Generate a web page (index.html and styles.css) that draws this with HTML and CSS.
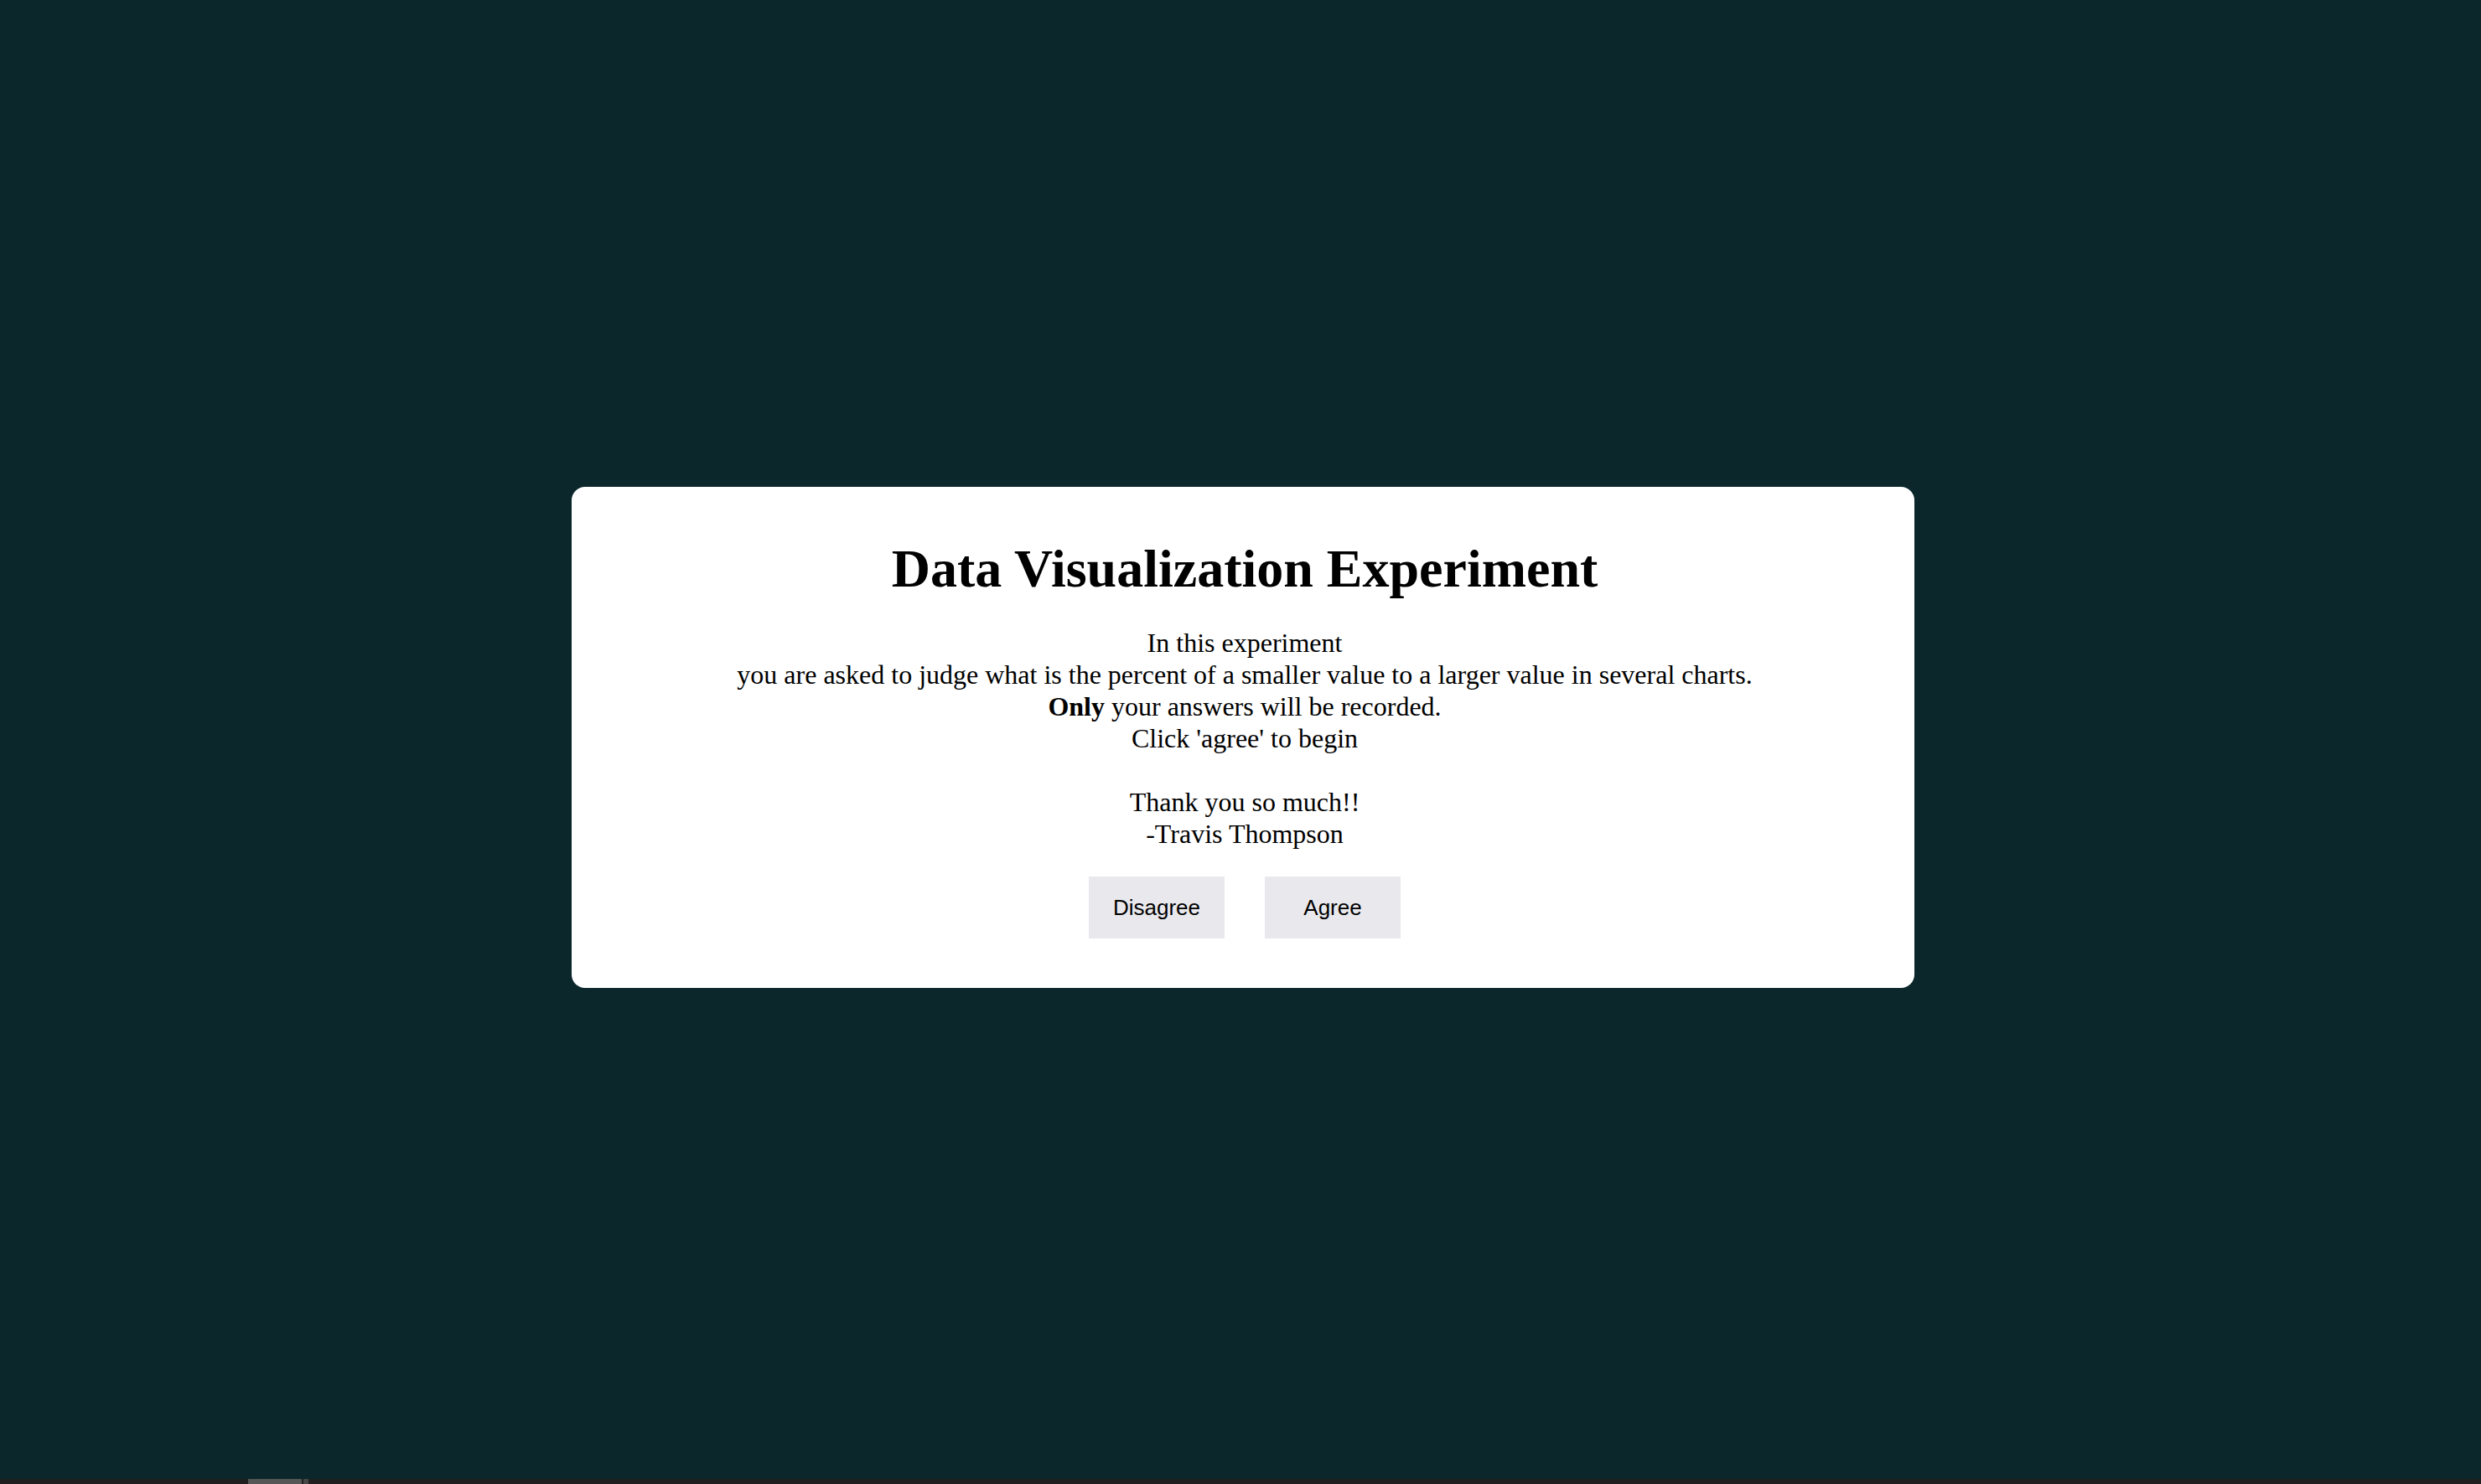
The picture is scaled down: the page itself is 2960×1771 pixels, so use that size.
FILE: index.html
```html
<!DOCTYPE html>
<html lang="en">
<head>
<meta charset="utf-8">
<title>Data Visualization Experiment</title>
<link rel="stylesheet" href="styles.css">
</head>
<body>
<div class="stage">
  <div class="modal">
    <h1 class="title">Data Visualization Experiment</h1>
    <div class="intro">
      In this experiment<br>
      you are asked to judge what is the percent of a smaller value to a larger value in several charts.<br>
      <b>Only</b> your answers will be recorded.<br>
      Click 'agree' to begin<br>
      <br>
      Thank you so much!!<br>
      -Travis Thompson
    </div>
    <div class="actions">
      <button class="btn" type="button">Disagree</button>
      <button class="btn" type="button">Agree</button>
    </div>
  </div>
</div>
<div class="scrollbar">
  <span class="thumb"></span>
  <span class="thumb-tail"></span>
</div>
</body>
</html>
```

FILE: styles.css
```css
html, body {
  margin: 0;
  padding: 0;
}

body {
  height: 1771px;
  background: #0b272c;
  display: flex;
  flex-direction: column;
  font-family: "Liberation Serif", "Times New Roman", serif;
  color: #000;
  overflow: hidden;
}

.stage {
  flex: 1;
  display: flex;
  align-items: center;
  justify-content: center;
  padding: 0 0 5px 6px;
}

.modal {
  width: 1602px;
  box-sizing: border-box;
  background: #ffffff;
  border-radius: 16px;
  padding: 61px 0 59px 4px;
  text-align: center;
}

.title {
  margin: 0 0 32px;
  font-size: 64px;
  line-height: 74px;
  font-weight: bold;
}

.intro {
  font-size: 32px;
  line-height: 38px;
}

.actions {
  margin-top: 32px;
  display: flex;
  justify-content: center;
  gap: 48px;
}

.btn {
  width: 162px;
  height: 74px;
  border: none;
  border-radius: 0;
  background: #e9e9ed;
  color: #000;
  font-family: "Liberation Sans", Arial, sans-serif;
  font-size: 26px;
  padding: 0;
  margin: 0;
  cursor: pointer;
}

.scrollbar {
  height: 6px;
  background: #211f1f;
  display: flex;
  padding-left: 296px;
  gap: 2px;
}

.thumb {
  width: 64px;
  background: #575757;
}

.thumb-tail {
  width: 6px;
  background: #474747;
}
```
